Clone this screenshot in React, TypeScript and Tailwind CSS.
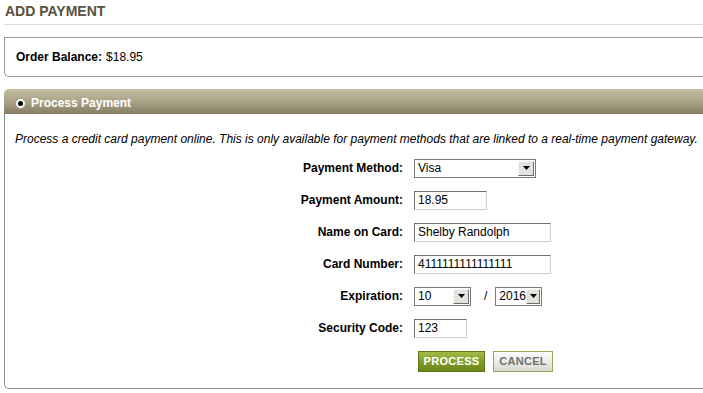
import React from "react";

const ROWS = [
  { label: "Payment Method:", kind: "select", value: "Visa", width: 122 },
  { label: "Payment Amount:", kind: "input", value: "18.95", width: 73 },
  { label: "Name on Card:", kind: "input", value: "Shelby Randolph", width: 137 },
  { label: "Card Number:", kind: "input", value: "4111111111111111", width: 137 },
  { label: "Expiration:", kind: "expiry", value: "", width: 0 },
  { label: "Security Code:", kind: "input", value: "123", width: 53 },
];

function Arrow() {
  return (
    <div className="w-[16px] h-[15px] flex items-center justify-center bg-[#e4e2dc] border-t border-l border-t-[#f8f8f8] border-l-[#f8f8f8] border-b border-r border-b-[#6e6e6e] border-r-[#6e6e6e]">
      <svg width="7" height="4" viewBox="0 0 7 4">
        <path d="M0 0H7L3.5 4Z" fill="#000" />
      </svg>
    </div>
  );
}

function FakeSelect({ value, width }: { value: string; width: number }) {
  return (
    <div
      className="h-[19px] flex items-center justify-between border border-[#7a7a7a] bg-white pl-[3px] pr-[1px]"
      style={{ width }}
    >
      <span className="text-[12px] leading-none">{value}</span>
      <Arrow />
    </div>
  );
}

function FakeInput({ value, width }: { value: string; width: number }) {
  return (
    <div
      className="h-[19px] flex items-center bg-white pl-[3px] border-t border-l border-t-[#6f6f6f] border-l-[#6f6f6f] border-b border-r border-b-[#cfcfcf] border-r-[#cfcfcf]"
      style={{ width }}
    >
      <span className="text-[12px] leading-none">{value}</span>
    </div>
  );
}

export default function App() {
  return (
    <div className="w-[703px] h-[393px] overflow-hidden bg-white text-[12px] text-black" style={{ fontFamily: '"Liberation Sans", Arial, sans-serif' }}>
      <div className="w-[760px] pl-[4px]">
        <div className="h-[25px] border-b border-[#dadada] pl-[1px] pt-[3px]">
          <h1 className="text-[14px] font-bold leading-[16px] text-[#5a513f]">ADD PAYMENT</h1>
        </div>

        {/* Order balance */}
        <div className="mt-[12px] h-[40px] border-t border-l border-b border-[#9a9a9a] rounded-bl-[5px] flex items-center pl-[11px] pb-[1px]">
          <span className="font-bold">Order Balance:</span>
          <span className="ml-[4px]">$18.95</span>
        </div>

        {/* Process payment panel */}
        <div className="mt-[12px]">
          <div className="h-[25px] rounded-tl-[5px] bg-[linear-gradient(#c6bfa3,#aaa285_50%,#867e63)] flex items-center pl-[11px] gap-[5px] pt-[3px]">
            <div className="w-[11px] h-[11px] rounded-full bg-white border border-[#9a9a9a] flex items-center justify-center">
              <div className="w-[5px] h-[5px] rounded-full bg-black" />
            </div>
            <span className="font-bold text-white">Process Payment</span>
          </div>
          <div className="h-[275px] border-l border-b border-[#8e8e8e] rounded-bl-[5px] pl-[10px] pt-[18px]">
            <p className="italic leading-[14px]">
              Process a credit card payment online. This is only available for payment methods that are linked to a real-time payment gateway.
            </p>
            <div className="mt-[6px] flex flex-col">
              {ROWS.map((r) => (
                <div key={r.label} className="h-[32px] flex items-center">
                  <div className="w-[399px] text-right font-bold pr-[11px]">{r.label}</div>
                  {r.kind === "select" && <FakeSelect value={r.value} width={r.width} />}
                  {r.kind === "input" && <FakeInput value={r.value} width={r.width} />}
                  {r.kind === "expiry" && (
                    <div className="flex items-center">
                      <FakeSelect value="10" width={57} />
                      <span className="ml-[13px] mr-[8px]">/</span>
                      <FakeSelect value="2016" width={47} />
                    </div>
                  )}
                </div>
              ))}
            </div>
            <div className="mt-[7px] flex gap-[8px] pl-[403px]">
              <button className="w-[67px] h-[21px] border border-[#5f761a] bg-[linear-gradient(#a3bb44,#7f9a27_55%,#6c8619)] text-white font-bold text-[11px] tracking-[0.3px]">
                PROCESS
              </button>
              <button className="w-[60px] h-[21px] border border-[#93a85a] bg-[linear-gradient(#fbfbfb,#e9e9e6_60%,#d6d6d2)] text-[#707070] font-bold text-[11px] tracking-[0.3px]">
                CANCEL
              </button>
            </div>
          </div>
        </div>
      </div>
    </div>
  );
}
